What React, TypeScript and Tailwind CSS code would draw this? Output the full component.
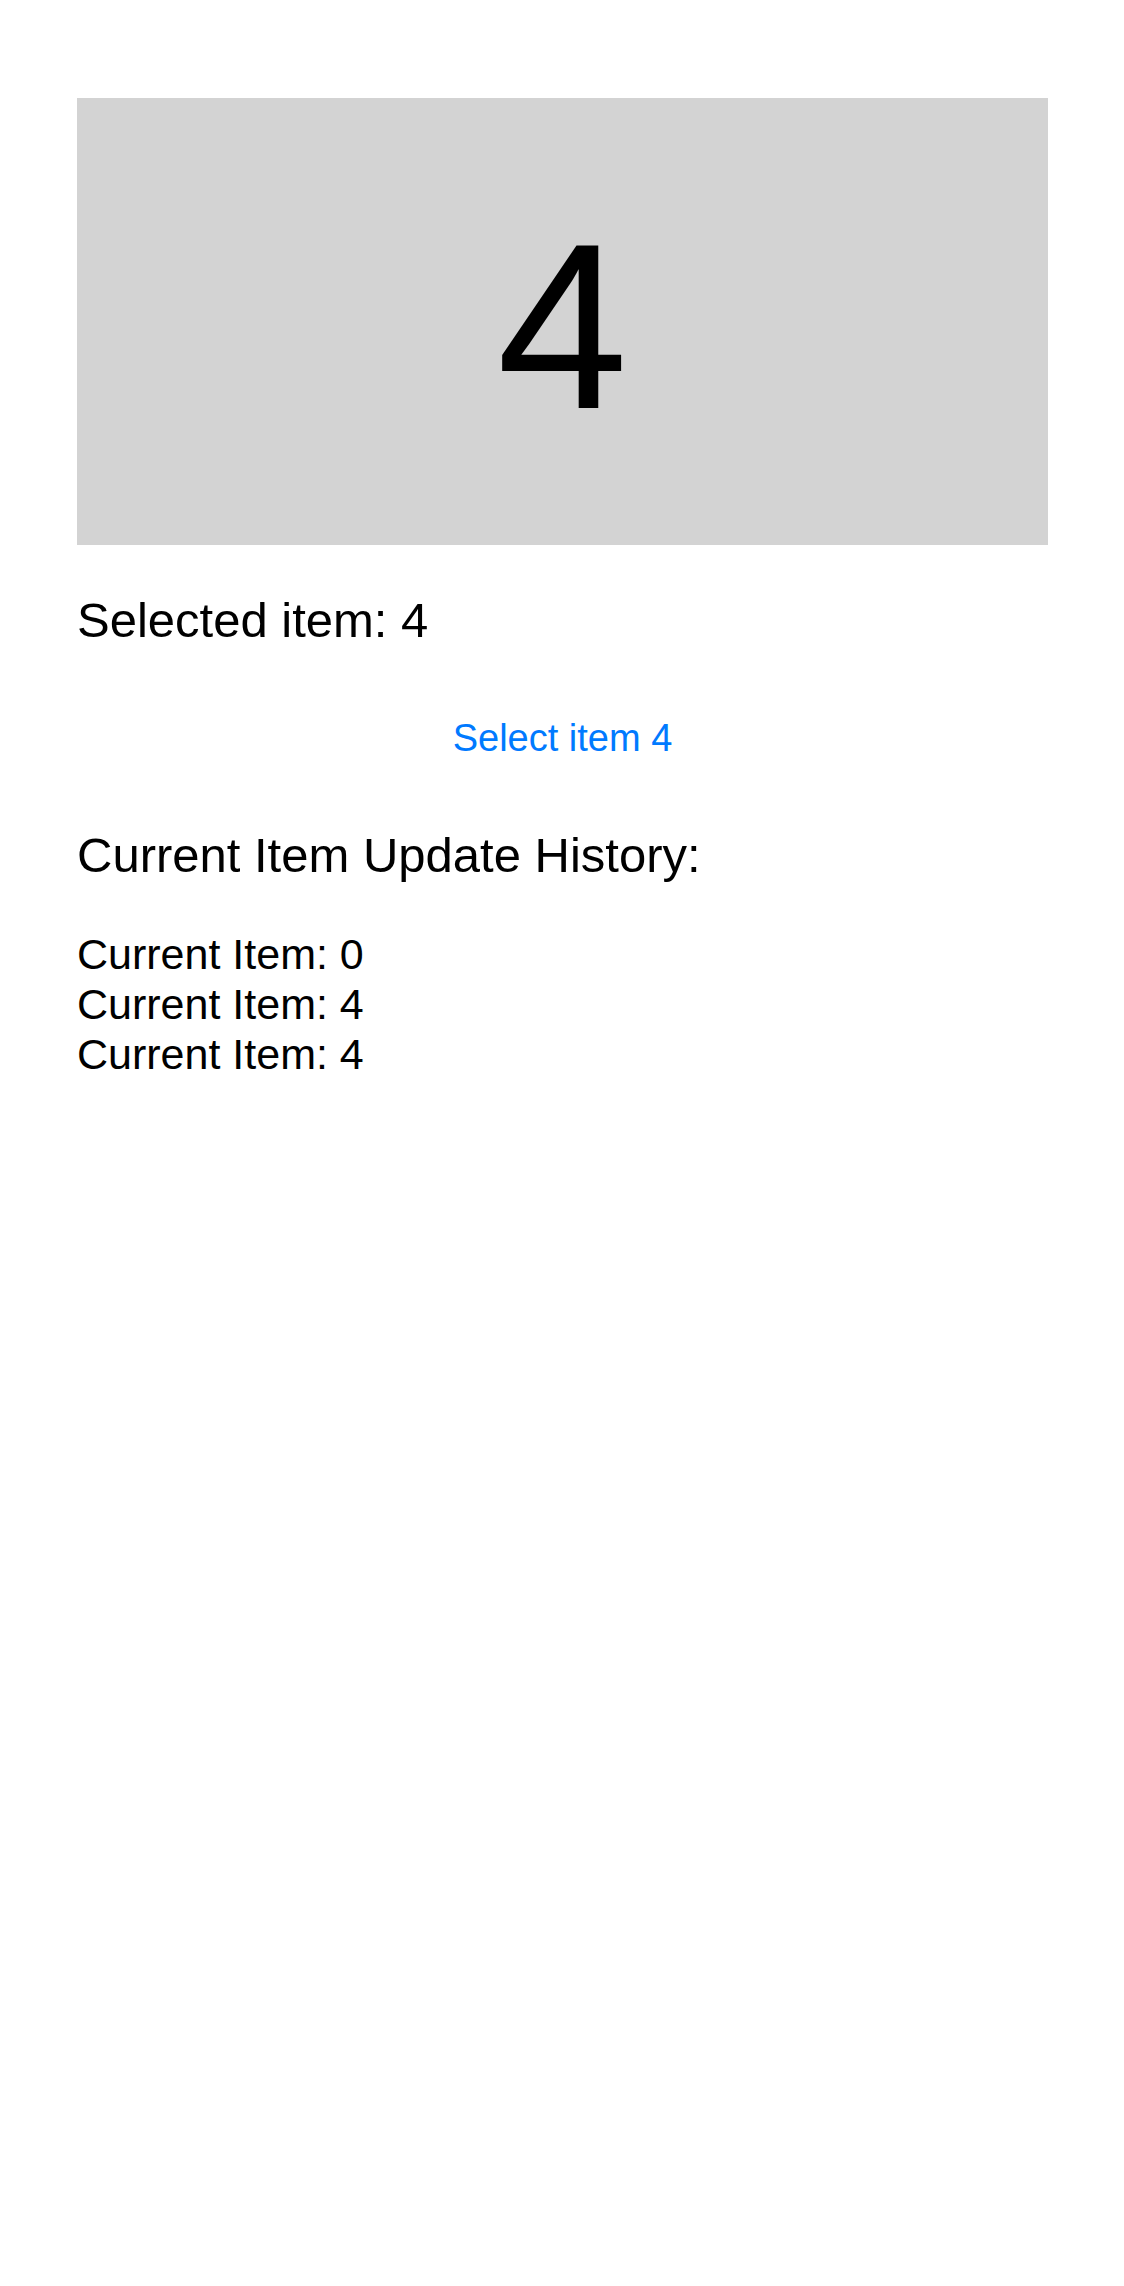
import { useState } from "react";

export default function App() {
  const [selected, setSelected] = useState(4);
  const [history, setHistory] = useState<number[]>([0, 4, 4]);

  const selectItem = () => {
    setSelected(4);
    setHistory((h) => [...h, 4]);
  };

  return (
    <div className="min-h-screen bg-white pl-[77px] pr-[76px] pt-[98px] font-['Liberation_Sans',Arial,sans-serif] text-black">
      {/* Current item */}
      <div className="flex h-[447px] items-center justify-center bg-[#d3d3d3] pt-[9px]">
        <span className="text-[236px] leading-none">{selected}</span>
      </div>

      <p className="mt-[46px] text-[49px] leading-[58px]">Selected item: {selected}</p>

      <div className="mt-[66px] flex justify-center">
        <button
          type="button"
          onClick={selectItem}
          className="text-[38px] leading-[46px] text-[#007aff]"
        >
          Select item 4
        </button>
      </div>

      <h2 className="mt-[65px] text-[49px] leading-[58px]">Current Item Update History:</h2>

      <ul className="mt-[45px]">
        {history.map((item, i) => (
          <li key={i} className="text-[43px] leading-[50px]">
            Current Item: {item}
          </li>
        ))}
      </ul>
    </div>
  );
}
